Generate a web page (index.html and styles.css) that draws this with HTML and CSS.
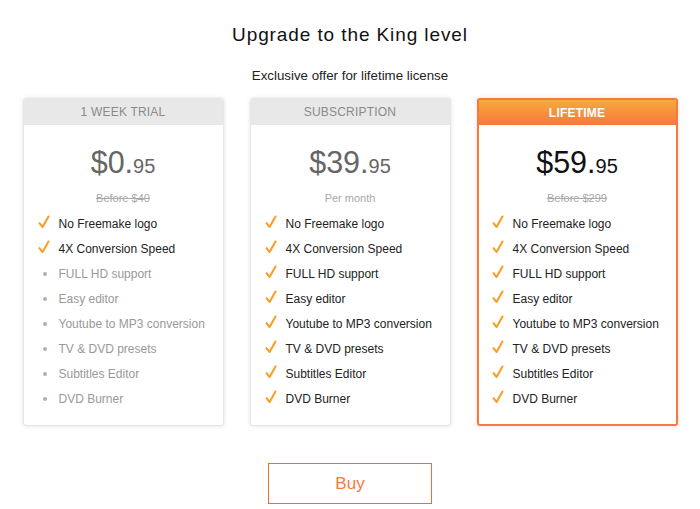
FILE: index.html
```html
<!DOCTYPE html>
<html>
<head>
<meta charset="utf-8">
<link rel="stylesheet" href="styles.css">
</head>
<body>
<div class="page">
  <h1 class="title">Upgrade to the King level</h1>
  <p class="subtitle">Exclusive offer for lifetime license</p>
  <div class="plans">
    <div class="card">
      <div class="head">1 WEEK TRIAL</div>
      <div class="price"><span class="big">$0.</span><span class="cents">95</span></div>
      <div class="note strike">Before $40</div>
      <ul class="features">
        <li class="on"><span class="mark"><svg viewBox="0 0 12 14"><path d="M1.5 8.2 L4.6 12 L10.5 1.5"/></svg></span>No Freemake logo</li>
        <li class="on"><span class="mark"><svg viewBox="0 0 12 14"><path d="M1.5 8.2 L4.6 12 L10.5 1.5"/></svg></span>4X Conversion Speed</li>
        <li class="off"><span class="mark"><span class="dot"></span></span>FULL HD support</li>
        <li class="off"><span class="mark"><span class="dot"></span></span>Easy editor</li>
        <li class="off"><span class="mark"><span class="dot"></span></span>Youtube to MP3 conversion</li>
        <li class="off"><span class="mark"><span class="dot"></span></span>TV &amp; DVD presets</li>
        <li class="off"><span class="mark"><span class="dot"></span></span>Subtitles Editor</li>
        <li class="off"><span class="mark"><span class="dot"></span></span>DVD Burner</li>
      </ul>
    </div>
    <div class="card">
      <div class="head">SUBSCRIPTION</div>
      <div class="price"><span class="big">$39.</span><span class="cents">95</span></div>
      <div class="note">Per month</div>
      <ul class="features">
        <li class="on"><span class="mark"><svg viewBox="0 0 12 14"><path d="M1.5 8.2 L4.6 12 L10.5 1.5"/></svg></span>No Freemake logo</li>
        <li class="on"><span class="mark"><svg viewBox="0 0 12 14"><path d="M1.5 8.2 L4.6 12 L10.5 1.5"/></svg></span>4X Conversion Speed</li>
        <li class="on"><span class="mark"><svg viewBox="0 0 12 14"><path d="M1.5 8.2 L4.6 12 L10.5 1.5"/></svg></span>FULL HD support</li>
        <li class="on"><span class="mark"><svg viewBox="0 0 12 14"><path d="M1.5 8.2 L4.6 12 L10.5 1.5"/></svg></span>Easy editor</li>
        <li class="on"><span class="mark"><svg viewBox="0 0 12 14"><path d="M1.5 8.2 L4.6 12 L10.5 1.5"/></svg></span>Youtube to MP3 conversion</li>
        <li class="on"><span class="mark"><svg viewBox="0 0 12 14"><path d="M1.5 8.2 L4.6 12 L10.5 1.5"/></svg></span>TV &amp; DVD presets</li>
        <li class="on"><span class="mark"><svg viewBox="0 0 12 14"><path d="M1.5 8.2 L4.6 12 L10.5 1.5"/></svg></span>Subtitles Editor</li>
        <li class="on"><span class="mark"><svg viewBox="0 0 12 14"><path d="M1.5 8.2 L4.6 12 L10.5 1.5"/></svg></span>DVD Burner</li>
      </ul>
    </div>
    <div class="card best">
      <div class="head">LIFETIME</div>
      <div class="price"><span class="big">$59.</span><span class="cents">95</span></div>
      <div class="note strike">Before $299</div>
      <ul class="features">
        <li class="on"><span class="mark"><svg viewBox="0 0 12 14"><path d="M1.5 8.2 L4.6 12 L10.5 1.5"/></svg></span>No Freemake logo</li>
        <li class="on"><span class="mark"><svg viewBox="0 0 12 14"><path d="M1.5 8.2 L4.6 12 L10.5 1.5"/></svg></span>4X Conversion Speed</li>
        <li class="on"><span class="mark"><svg viewBox="0 0 12 14"><path d="M1.5 8.2 L4.6 12 L10.5 1.5"/></svg></span>FULL HD support</li>
        <li class="on"><span class="mark"><svg viewBox="0 0 12 14"><path d="M1.5 8.2 L4.6 12 L10.5 1.5"/></svg></span>Easy editor</li>
        <li class="on"><span class="mark"><svg viewBox="0 0 12 14"><path d="M1.5 8.2 L4.6 12 L10.5 1.5"/></svg></span>Youtube to MP3 conversion</li>
        <li class="on"><span class="mark"><svg viewBox="0 0 12 14"><path d="M1.5 8.2 L4.6 12 L10.5 1.5"/></svg></span>TV &amp; DVD presets</li>
        <li class="on"><span class="mark"><svg viewBox="0 0 12 14"><path d="M1.5 8.2 L4.6 12 L10.5 1.5"/></svg></span>Subtitles Editor</li>
        <li class="on"><span class="mark"><svg viewBox="0 0 12 14"><path d="M1.5 8.2 L4.6 12 L10.5 1.5"/></svg></span>DVD Burner</li>
      </ul>
    </div>
  </div>
  <div class="actions"><button class="buy">Buy</button></div>
</div>
</body>
</html>
```

FILE: styles.css
```css
* { box-sizing: border-box; }
html, body { margin: 0; padding: 0; background: #fff; }
body {
  font-family: "Liberation Sans", Arial, sans-serif;
  color: #222;
  width: 700px;
  height: 509px;
  overflow: hidden;
}
.page {
  display: flex;
  flex-direction: column;
  align-items: center;
  padding-top: 23px;
}
.title {
  margin: 0;
  font-size: 19px;
  font-weight: normal;
  letter-spacing: 0.9px;
  line-height: 24px;
  color: #111;
}
.subtitle {
  margin: 21px 0 0;
  font-size: 13.3px;
  line-height: 16px;
  color: #222;
}
.plans {
  display: flex;
  gap: 26px;
  margin-top: 14px;
}
.card {
  width: 201px;
  height: 328px;
  background: #fff;
  border: 1px solid #e6e6e6;
  border-radius: 3px;
  box-shadow: 0 0 4px rgba(0,0,0,0.12);
  display: flex;
  flex-direction: column;
  overflow: hidden;
}
.head {
  height: 26px;
  background: #e8e8e8;
  color: #8a8a8a;
  font-size: 12px;
  letter-spacing: 0.2px;
  display: flex;
  align-items: center;
  justify-content: center;
  flex: none;
}
.price {
  text-align: center;
  margin-top: 19px;
  height: 36px;
  line-height: 36px;
  color: #666;
}
.price .big { font-size: 30.5px; }
.price .cents { font-size: 20px; }
.note {
  text-align: center;
  font-size: 11px;
  color: #a8a8a8;
  margin-top: 11px;
  line-height: 14px;
}
.strike { text-decoration: line-through; }
.features {
  list-style: none;
  margin: 6px 0 0;
  padding: 0 0 0 14px;
}
.features li {
  display: flex;
  align-items: center;
  height: 25px;
  font-size: 12px;
  color: #222;
}
.features li.off { color: #999; }
.mark {
  width: 21px;
  display: flex;
  align-items: center;
  justify-content: flex-start;
  flex: none;
}
.mark svg {
  width: 12px;
  height: 14px;
  fill: none;
  stroke: #f9a02a;
  stroke-width: 2.1;
  stroke-linecap: round;
  stroke-linejoin: round;
  margin-top: -3px;
}
.dot {
  width: 4px;
  height: 4px;
  border-radius: 50%;
  background: #b0b0b0;
  margin-left: 5px;
}
.best {
  border: 2px solid #f7793f;
  box-shadow: 0 0 4px rgba(247,121,63,0.25);
}
.best .head {
  background: linear-gradient(#f7aa3b, #f7773f);
  color: #fff;
  font-weight: bold;
  height: 25px;
}
.best .price { color: #111; }
.best .features { padding-left: 13px; }
.actions {
  margin-top: 37px;
  display: flex;
  justify-content: center;
}
.buy {
  width: 164px;
  height: 41px;
  border: 1.5px solid #f86a33;
  background: #fff;
  color: #f7793f;
  font-family: "Liberation Sans", Arial, sans-serif;
  font-size: 17px;
  cursor: pointer;
}
```
